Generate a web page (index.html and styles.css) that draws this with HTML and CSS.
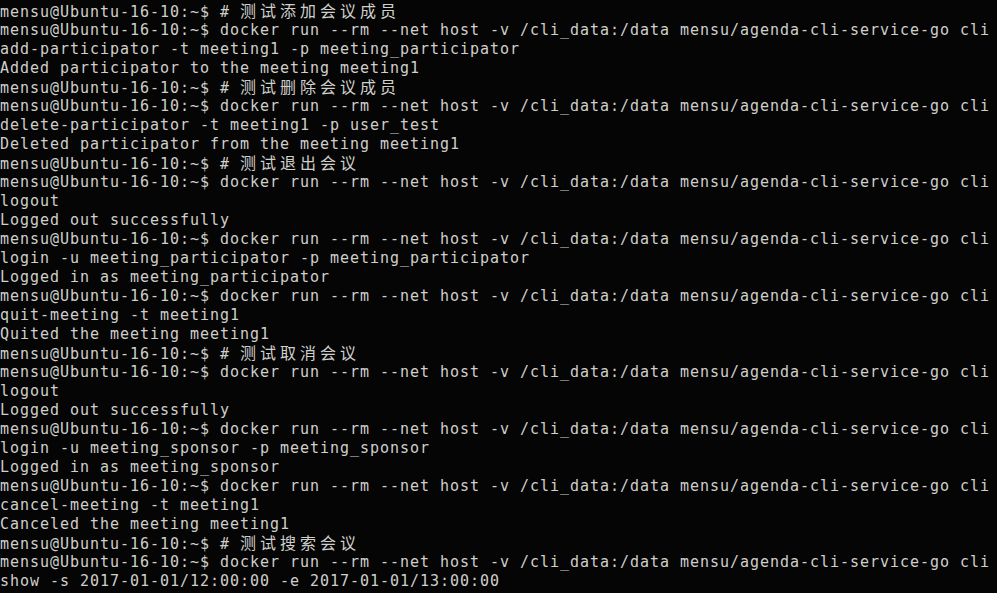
FILE: index.html
```html
<!DOCTYPE html>
<html lang="zh">
<head>
<meta charset="utf-8">
<title>Terminal</title>
<link rel="stylesheet" href="styles.css">
</head>
<body>
<main class="term">
<div class="ln">mensu@Ubuntu-16-10:~$ # <span class="cjk">测试添加会议成员</span></div>
<div class="ln">mensu@Ubuntu-16-10:~$ docker run --rm --net host -v /cli_data:/data mensu/agenda-cli-service-go cli</div>
<div class="ln">add-participator -t meeting1 -p meeting_participator</div>
<div class="ln">Added participator to the meeting meeting1</div>
<div class="ln">mensu@Ubuntu-16-10:~$ # <span class="cjk">测试删除会议成员</span></div>
<div class="ln">mensu@Ubuntu-16-10:~$ docker run --rm --net host -v /cli_data:/data mensu/agenda-cli-service-go cli</div>
<div class="ln">delete-participator -t meeting1 -p user_test</div>
<div class="ln">Deleted participator from the meeting meeting1</div>
<div class="ln">mensu@Ubuntu-16-10:~$ # <span class="cjk">测试退出会议</span></div>
<div class="ln">mensu@Ubuntu-16-10:~$ docker run --rm --net host -v /cli_data:/data mensu/agenda-cli-service-go cli</div>
<div class="ln">logout</div>
<div class="ln">Logged out successfully</div>
<div class="ln">mensu@Ubuntu-16-10:~$ docker run --rm --net host -v /cli_data:/data mensu/agenda-cli-service-go cli</div>
<div class="ln">login -u meeting_participator -p meeting_participator</div>
<div class="ln">Logged in as meeting_participator</div>
<div class="ln">mensu@Ubuntu-16-10:~$ docker run --rm --net host -v /cli_data:/data mensu/agenda-cli-service-go cli</div>
<div class="ln">quit-meeting -t meeting1</div>
<div class="ln">Quited the meeting meeting1</div>
<div class="ln">mensu@Ubuntu-16-10:~$ # <span class="cjk">测试取消会议</span></div>
<div class="ln">mensu@Ubuntu-16-10:~$ docker run --rm --net host -v /cli_data:/data mensu/agenda-cli-service-go cli</div>
<div class="ln">logout</div>
<div class="ln">Logged out successfully</div>
<div class="ln">mensu@Ubuntu-16-10:~$ docker run --rm --net host -v /cli_data:/data mensu/agenda-cli-service-go cli</div>
<div class="ln">login -u meeting_sponsor -p meeting_sponsor</div>
<div class="ln">Logged in as meeting_sponsor</div>
<div class="ln">mensu@Ubuntu-16-10:~$ docker run --rm --net host -v /cli_data:/data mensu/agenda-cli-service-go cli</div>
<div class="ln">cancel-meeting -t meeting1</div>
<div class="ln">Canceled the meeting meeting1</div>
<div class="ln">mensu@Ubuntu-16-10:~$ # <span class="cjk">测试搜索会议</span></div>
<div class="ln">mensu@Ubuntu-16-10:~$ docker run --rm --net host -v /cli_data:/data mensu/agenda-cli-service-go cli</div>
<div class="ln">show -s 2017-01-01/12:00:00 -e 2017-01-01/13:00:00</div>
</main>
</body>
</html>
```
FILE: styles.css
```css
html, body {
  margin: 0;
  padding: 0;
  background: #050505;
  height: 100%;
  overflow: hidden;
}
.term {
  padding: 2px 0 0 0;
  color: #cfcfcb;
  font-family: "DejaVu Sans Mono", "Noto Sans CJK SC", monospace;
  font-size: 15px;
  letter-spacing: 0.97px;
  line-height: 19px;
}
.ln {
  white-space: pre;
  height: 19px;
}
.cjk {
  font-family: "Noto Sans CJK SC", sans-serif;
  font-size: 16px;
  line-height: 16px;
  letter-spacing: 4px;
}
```
